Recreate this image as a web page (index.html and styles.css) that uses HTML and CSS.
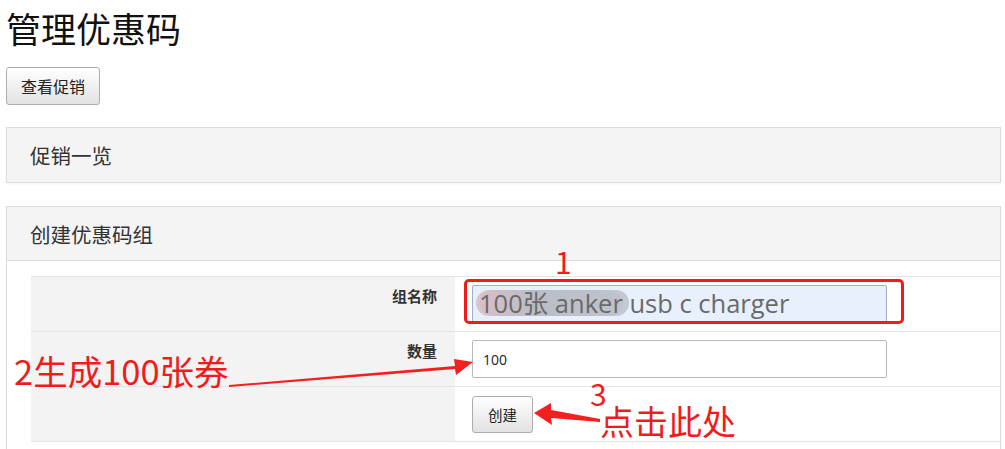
FILE: index.html
```html
<!DOCTYPE html>
<html lang="zh">
<head>
<meta charset="utf-8">
<title>管理优惠码</title>
<link rel="stylesheet" href="styles.css">
</head>
<body>
<div class="page">
  <h1 class="title">管理优惠码</h1>
  <button class="btn btn-view">查看促销</button>

  <section class="panel panel-list">
    <div class="panel-head">促销一览</div>
  </section>

  <section class="panel panel-create">
    <div class="panel-head">创建优惠码组</div>
    <div class="panel-body">
      <div class="form-table">
        <div class="row">
          <div class="label">组名称</div>
          <div class="field"><div class="input input-name"><span class="smear">100张 anker</span> usb c charger</div></div>
        </div>
        <div class="row">
          <div class="label">数量</div>
          <div class="field"><div class="input input-qty">100</div></div>
        </div>
        <div class="row">
          <div class="label"></div>
          <div class="field"><button class="btn btn-create">创建</button></div>
        </div>
      </div>
    </div>
  </section>

  <div class="mark mark-box"></div>
  <div class="note note-1">1</div>
  <div class="note note-2">2生成100张券</div>
  <div class="note note-3">3</div>
  <div class="note note-4">点击此处</div>
  <svg class="arrows" width="1005" height="449" viewBox="0 0 1005 449">
    <polygon fill="#f41f1f" points="229,385 455,366 454,359 473,362 456,375 455,369 229,387"/>
    <polygon fill="#f41f1f" points="600,422 551,418 552,425 534,413 551,403 551,410 600,419"/>
  </svg>
</div>
</body>
</html>
```
FILE: styles.css
```css
* { box-sizing: border-box; }
html, body { margin: 0; padding: 0; background: #fff; }
body {
  font-family: "Noto Sans CJK SC", "Noto Sans", sans-serif;
  color: #222;
  width: 1005px;
  height: 449px;
  overflow: hidden;
}
.page {
  position: relative;
  padding: 0 4px 0 6px;
}
.title {
  margin: 0;
  padding: 3px 0 0 0;
  font-size: 35px;
  font-weight: 400;
  line-height: 50px;
  color: #111;
}
.btn {
  font-family: "Noto Sans CJK SC", sans-serif;
  background: linear-gradient(#ffffff, #e2e2e2);
  border: 1px solid #adadad;
  border-radius: 3px;
  color: #222;
  padding: 0;
  display: flex;
  align-items: center;
  justify-content: center;
}
.btn-view {
  margin-top: 14px;
  width: 94px;
  height: 38px;
  font-size: 16px;
}
.panel {
  border: 1px solid #dcdcdc;
  background: #fff;
  box-shadow: 0 1px 2px rgba(0,0,0,0.05);
  width: 995px;
}
.panel-list { margin-top: 22px; }
.panel-create { margin-top: 23px; padding-bottom: 20px; }
.panel-head {
  background: #f4f4f4;
  height: 54px;
  padding-left: 23px;
  display: flex;
  align-items: center;
  font-size: 20.5px;
  color: #333;
}
.panel-create .panel-head { border-bottom: 1px solid #dcdcdc; }
.panel-body {
  padding: 15px 0 0 24px;
}
.form-table {
  border-bottom: 1px solid #e4e4e4;
}
.row {
  display: grid;
  grid-template-columns: 424px 1fr;
  height: 55px;
  border-top: 1px solid #e4e4e4;
}
.label {
  background: #f3f3f3;
  text-align: right;
  padding: 8px 18px 0 0;
  font-size: 15px;
  font-weight: 700;
  color: #333;
}
.field {
  padding: 8px 0 0 17px;
}
.input {
  width: 415px;
  height: 38px;
  border: 1px solid #b8b8b8;
  border-radius: 2px;
  display: flex;
  align-items: center;
  padding-left: 10px;
  font-family: "Open Sans", "Noto Sans CJK SC", sans-serif;
  font-size: 14px;
  color: #222;
  white-space: pre;
}
.input-name {
  background: #e8f0fe;
  border-color: #a3afc4;
  color: #6a6a6a;
  font-size: 25.5px;
  padding-left: 6px;
  padding-bottom: 2px;
}
.smear {
  background: linear-gradient(90deg, rgba(200,130,130,0.45), rgba(140,140,145,0.5) 40%, rgba(140,140,145,0.45));
  border-radius: 13px;
  box-shadow: -3px 0 0 0 rgba(190,135,135,0.4), 6px 0 0 0 rgba(140,140,145,0.4);
  line-height: 26px;
}
.btn-create {
  width: 61px;
  height: 37px;
  font-size: 14.5px;
  margin-top: 1px;
}
.mark, .note, .arrows { position: absolute; }
.mark-box {
  left: 464px;
  top: 279px;
  width: 440px;
  height: 45px;
  border: 3px solid #f21b1b;
  border-radius: 5px;
}
.note {
  color: #f21b1b;
  font-family: "Noto Sans CJK SC", sans-serif;
  line-height: 1;
  white-space: nowrap;
}
.note-1 { left: 555px; top: 246px; font-size: 30px; }
.note-2 { left: 14px; top: 353px; font-size: 34.5px; }
.note-3 { left: 590px; top: 382px; font-size: 30px; line-height: 22px; }
.note-4 { left: 600px; top: 407px; font-size: 34px; line-height: 28px; }
.arrows { left: 0; top: 0; pointer-events: none; }
```
